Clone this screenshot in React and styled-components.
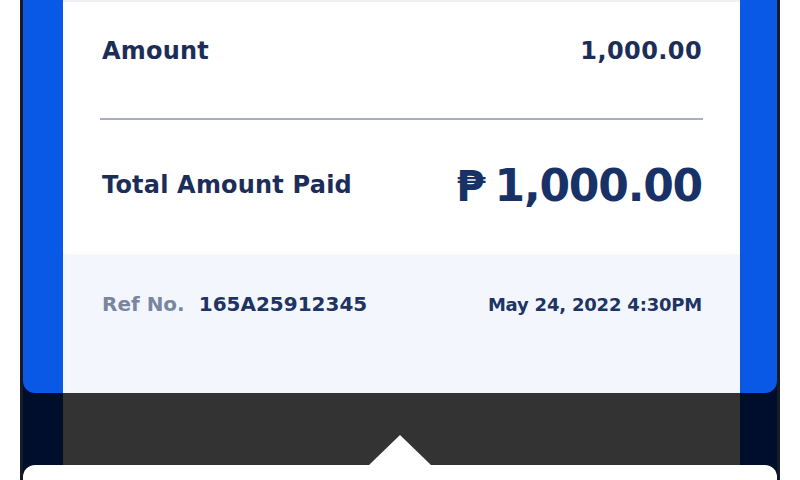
import styled, { createGlobalStyle } from "styled-components"

const Global = createGlobalStyle`
    html, body {
        margin: 0;
        padding: 0;
        background: #ffffff;
    }

    body {
        font-family: "DejaVu Sans", "Noto Sans", sans-serif;
    }
`

const App = () => {

    return (
        <>
            <Global />
            <Page>
                <Frame>
                    <BlueCard>
                        <Receipt>
                            <Row height={116} shift={18}>
                                <Label>Amount</Label>
                                <Value>1,000.00</Value>
                            </Row>

                            <Divider />

                            <Row height={134} shift={4}>
                                <Label>Total Amount Paid</Label>
                                <Total>
                                    <span className="peso">₱</span>
                                    <span>1,000.00</span>
                                </Total>
                            </Row>

                            <Footer>
                                <Ref>
                                    <span className="name">Ref No.</span>
                                    <span className="code">165A25912345</span>
                                </Ref>
                                <DateText>May 24, 2022 4:30PM</DateText>
                            </Footer>
                        </Receipt>
                    </BlueCard>

                    <Dim>
                        <div className="center" />
                    </Dim>

                    <Sheet />
                </Frame>
            </Page>
        </>
    )
}

export default App;

const Page = styled.div`
    width: 800px;
    height: 480px;
    overflow: hidden;
    padding: 0 20px;
    box-sizing: border-box;
`

const Frame = styled.div`
    height: 480px;
    display: flex;
    flex-direction: column;
    background: #000e2e;
    border-left: 3px solid #161b26;
    border-right: 3px solid #161b26;
`

const BlueCard = styled.div`
    height: 393px;
    flex-shrink: 0;
    display: flex;
    padding: 0 37px 0 40px;
    background: #0a58e6;
    border-radius: 0 0 12px 12px;
    overflow: hidden;
`

const Receipt = styled.div`
    flex: 1;
    display: flex;
    flex-direction: column;
    background: #ffffff;
    border-top: 2px solid #eef0f3;
`

const Row = styled.div`
    height: ${p => p.height}px;
    flex-shrink: 0;
    display: flex;
    align-items: center;
    justify-content: space-between;
    padding: 0 38px ${p => p.shift}px 39px;
    box-sizing: border-box;
`

const Label = styled.span`
    font-weight: 700;
    font-size: 24px;
    color: #1c2e58;
    letter-spacing: 0.2px;
`

const Value = styled.span`
    font-weight: 700;
    font-size: 24px;
    color: #1c2e58;
    letter-spacing: 0.4px;
`

const Divider = styled.div`
    height: 2px;
    margin: 0 37px 0 37px;
    background: #a9b0bc;
`

const Total = styled.span`
    display: flex;
    align-items: baseline;
    gap: 9px;
    color: #183268;
    font-weight: 700;
    font-size: 44px;
    letter-spacing: -1.2px;

    .peso {
        font-size: 42px;
        letter-spacing: 0;
    }
`

const Footer = styled.div`
    flex: 1;
    display: flex;
    align-items: flex-start;
    justify-content: space-between;
    padding: 38px 38px 0 39px;
    background: #f3f7fd;
`

const Ref = styled.span`
    display: flex;
    gap: 14px;
    font-weight: 700;
    font-size: 20px;

    .name {
        color: #7a86a0;
    }

    .code {
        color: #1e3462;
    }
`

const DateText = styled.span`
    font-weight: 700;
    font-size: 18px;
    color: #1e3462;
    letter-spacing: -0.2px;
    padding-top: 2px;
`

const Dim = styled.div`
    height: 72px;
    flex-shrink: 0;
    display: flex;
    padding: 0 37px 0 40px;

    .center {
        flex: 1;
        background: #333333;
    }
`

const Sheet = styled.div`
    flex: 1;
    position: relative;
    background: #ffffff;
    border-radius: 12px 12px 0 0;

    &::before {
        content: "";
        position: absolute;
        left: 345px;
        top: -30px;
        width: 64px;
        height: 31px;
        background: #ffffff;
        clip-path: polygon(50% 0, 100% 100%, 0 100%);
    }
`
